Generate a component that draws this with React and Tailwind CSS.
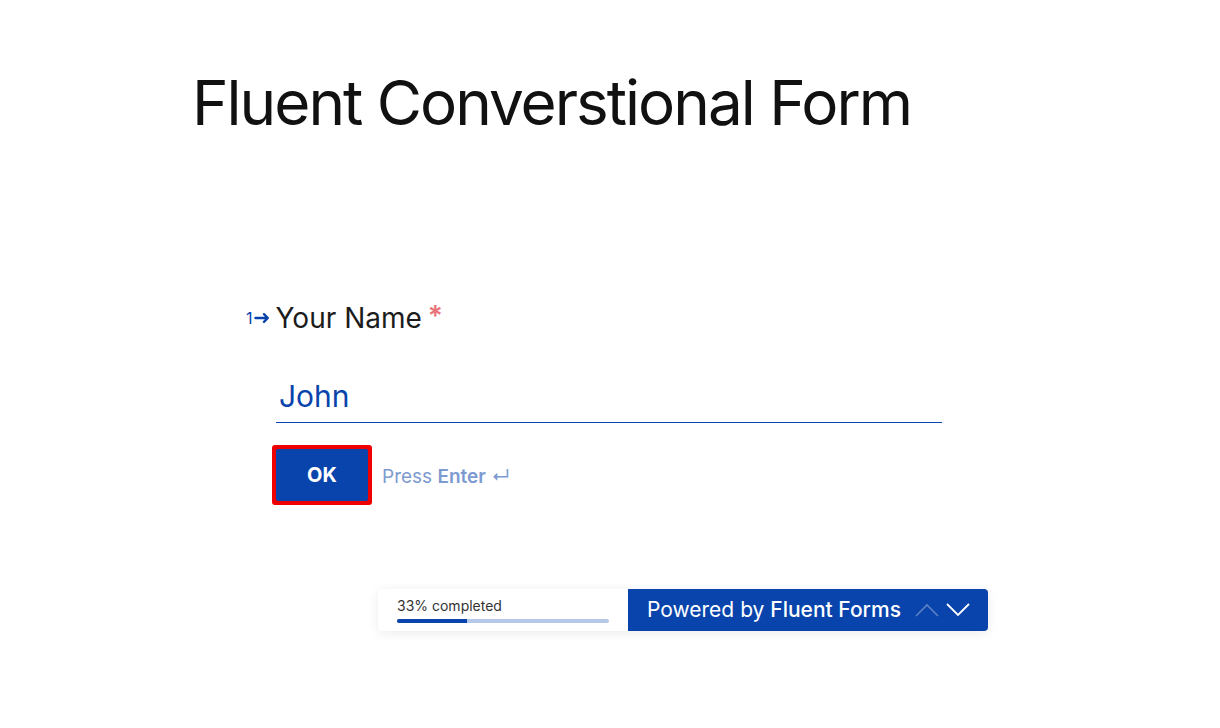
import React, { useState } from "react";

const App = () => {
  const [name, setName] = useState("John");

  return (
    <div className="min-h-[728px] w-[1220px] bg-white font-['Inter','Noto_Sans',sans-serif] text-[#1a1a1a]">
      <h1 className="pl-[192px] pt-[65px] text-[62px] leading-[76px] font-normal tracking-[-2px] text-[#111]">
        Fluent Converstional Form
      </h1>

      <div className="ml-[246px] mt-[159px] w-[696px]">
        <div className="flex items-center">
          <span className="flex items-center text-[16px] text-[#0844ac] mr-[6px]">
            1
            <svg width="16" height="14" viewBox="0 0 16 14" className="ml-[1px]">
              <path d="M1.5 7h12M10 3.2 13.8 7 10 10.8" fill="none" stroke="#0844ac" strokeWidth="2.4" strokeLinecap="round" strokeLinejoin="round" />
            </svg>
          </span>
          <span className="text-[28px] leading-[36px] text-[#1c1c1c]">Your Name</span>
          <span className="ml-[6px] self-start text-[28px] leading-[32px] font-semibold text-[#e8737a]">*</span>
        </div>

        <div className="ml-[30px] mt-[40px]">
          <input
            value={name}
            onChange={(e) => setName(e.target.value)}
            className="w-full border-b border-[#0844ac] bg-transparent pb-[6px] pl-[3px] text-[30px] leading-[40px] text-[#0844ac] outline-none"
          />
        </div>

        <div className="ml-[26px] mt-[22px] flex items-center">
          <div className="rounded-[3px] bg-[#ee0000] p-[4px]">
            <button className="h-[52px] w-[92px] rounded-[2px] bg-[#0844ac] text-[20px] font-bold text-white">
              OK
            </button>
          </div>
          <span className="ml-[10px] mt-[4px] text-[19px] text-[#7d9bd1]">
            Press <span className="font-semibold">Enter</span> ↵
          </span>
        </div>
      </div>

      <div className="ml-[378px] mt-[84px] flex h-[42px] w-[610px] rounded-[4px] shadow-[0_2px_12px_rgba(0,0,0,0.08)]">
        <div className="flex w-[250px] flex-col justify-center rounded-l-[4px] bg-white pl-[19px]">
          <span className="text-[14px] leading-[16px] text-[#333]">33% completed</span>
          <div className="mt-[5px] h-[4px] w-[212px] rounded-full bg-[#b5c8e7]">
            <div className="h-[4px] rounded-l-full bg-[#0844ac]" style={{ width: "33%" }} />
          </div>
        </div>
        <div className="flex flex-1 items-center rounded-r-[4px] bg-[#0844ac] pl-[19px]">
          <span className="text-[21px] text-white">
            Powered by <span className="font-medium">Fluent Forms</span>
          </span>
          <svg width="24" height="14" viewBox="0 0 24 14" className="ml-[14px]">
            <path d="M1 13 12 2l11 11" fill="none" stroke="#5a80c6" strokeWidth="1.6" />
          </svg>
          <svg width="24" height="14" viewBox="0 0 24 14" className="ml-[7px]">
            <path d="M1 1l11 11L23 1" fill="none" stroke="#fff" strokeWidth="1.8" />
          </svg>
        </div>
      </div>
    </div>
  );
};

export default App;
